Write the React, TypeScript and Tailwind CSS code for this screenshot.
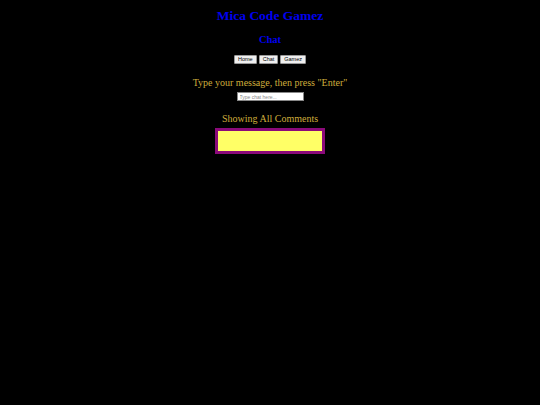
export default function App() {
  return (
    <div className="min-h-[405px] w-full bg-black font-['Liberation_Serif',serif] text-center">
      <div className="flex flex-col items-center pt-[8px]">
        <h1 className="text-[13.5px] leading-[16px] font-bold text-[#0000ee]">Mica Code Gamez</h1>
        <h2 className="mt-[10px] text-[10.5px] leading-[12px] font-bold text-[#0000ee]">Chat</h2>
        <div className="mt-[9px] flex gap-[2px] font-['Liberation_Sans',sans-serif]">
          <button className="h-[9px] rounded-[1px] border border-[#999] bg-[#efefef] px-[3px] text-[5.5px] leading-[7px] text-black">Home</button>
          <button className="h-[9px] rounded-[1px] border border-[#999] bg-[#efefef] px-[3px] text-[5.5px] leading-[7px] text-black">Chat</button>
          <button className="h-[9px] rounded-[1px] border border-[#999] bg-[#efefef] px-[3px] text-[5.5px] leading-[7px] text-black">Gamez</button>
        </div>
        <p className="mt-[13px] text-[10px] leading-[12px] text-[#cfae3c]">Type your message, then press "Enter"</p>
        <input
          placeholder="Type chat here..."
          className="mt-[3px] h-[9px] w-[67px] border border-[#888] bg-white px-[2px] font-['Liberation_Sans',sans-serif] text-[5px] text-black placeholder:text-[#888] outline-none"
        />
        <p className="mt-[12px] text-[10px] leading-[12px] text-[#cfae3c]">Showing All Comments</p>
        <div className="mt-[3px] h-[26px] w-[110px] border-[3px] border-[#8b0a7a] bg-[#ffff66]" />
      </div>
    </div>
  );
}
